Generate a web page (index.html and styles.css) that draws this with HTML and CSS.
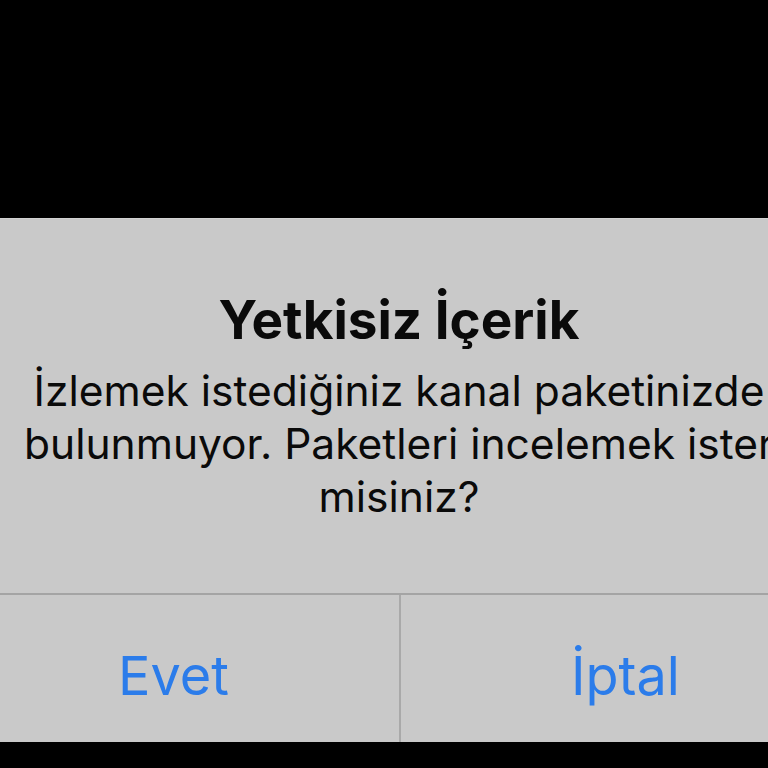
FILE: index.html
```html
<!DOCTYPE html>
<html lang="tr">
<head>
<meta charset="utf-8">
<title>Yetkisiz İçerik</title>
<link rel="stylesheet" href="styles.css">
</head>
<body>
<div class="screen">
  <div class="backdrop"></div>
  <div class="alert">
    <div class="alert-body">
      <h1 class="alert-title">Yetkisiz İçerik</h1>
      <p class="alert-message">İzlemek istediğiniz kanal paketinizde<br>bulunmuyor. Paketleri incelemek ister<br>misiniz?</p>
    </div>
    <div class="alert-actions">
      <button class="alert-btn">Evet</button>
      <button class="alert-btn">İptal</button>
    </div>
  </div>
</div>
</body>
</html>
```
FILE: styles.css
```css
html, body {
  margin: 0;
  padding: 0;
  background: #000;
  width: 768px;
  height: 768px;
  overflow: hidden;
}
.screen {
  width: 768px;
  height: 768px;
  overflow: hidden;
  font-family: Inter, "Noto Sans", sans-serif;
}
.backdrop {
  height: 218px;
}
.alert {
  width: 902px;
  margin-left: -52px;
  background: #c9c9c9;
  border-top: 1px solid #d2d2d2;
}
.alert-body {
  padding-top: 69px;
  padding-bottom: 70px;
  text-align: center;
  color: #0a0a0a;
}
.alert-title {
  margin: 0;
  font-size: 53px;
  line-height: 64px;
  font-weight: 700;
  white-space: nowrap;
}
.alert-message {
  margin: 12px 0 0;
  font-size: 42.5px;
  line-height: 53px;
  font-weight: 400;
  white-space: nowrap;
}
.alert-actions {
  display: grid;
  grid-template-columns: 1fr 1fr;
  border-top: 2px solid #a4a4a4;
  height: 147px;
}
.alert-btn {
  border: 0;
  margin: 0;
  padding: 14px 0 0;
  background: transparent;
  font-family: Inter, "Noto Sans", sans-serif;
  font-size: 54px;
  color: #2b7cea;
  display: flex;
  align-items: center;
  justify-content: center;
}
.alert-btn + .alert-btn {
  border-left: 2px solid #a9a9a9;
}
```
